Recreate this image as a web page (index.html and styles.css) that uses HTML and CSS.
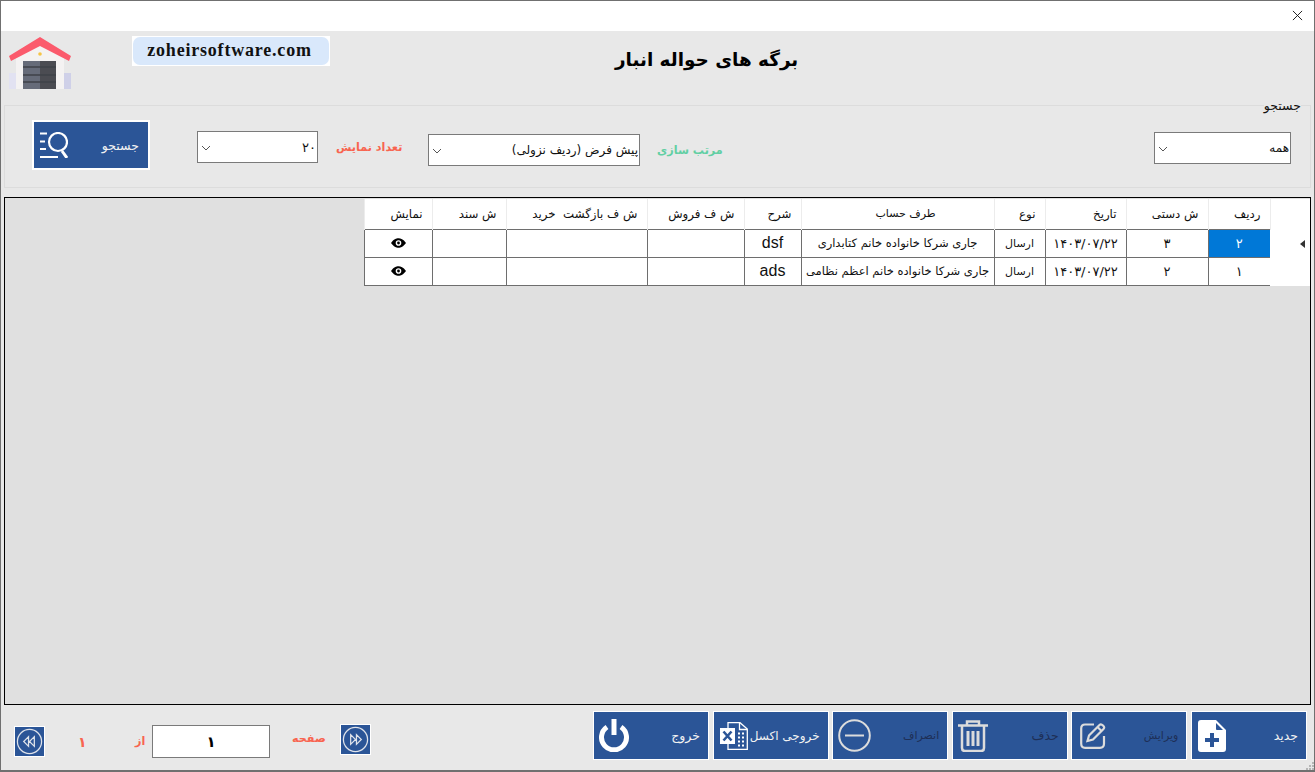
FILE: index.html
```html
<!DOCTYPE html>
<html lang="fa">
  <head>
    <meta charset="UTF-8" />
    <meta name="viewport" content="width=device-width, initial-scale=1.0" />
    <title>برگه های حواله انبار</title>
    <link rel="stylesheet" href="styles.css">
  </head>

  <body>
    <div class="pencere">
      <!-- نوار عنوان -->
      <div class="nawar-onvan">
        <svg class="bastan" viewBox="0 0 12 12"><path d="M1 1l10 10M11 1L1 11" /></svg>
      </div>

      <!-- سربرگ -->
      <header class="sarbarg">
        <svg class="logo" viewBox="0 0 62 54">
          <path d="M0 36H8V52H0Z" fill="#e2e2f2" />
          <path d="M54 36H62V52H54Z" fill="#cfd0e8" />
          <path d="M7 20L31 6L55 20V52H7Z" fill="#f4f2f2" />
          <path d="M0 19L31 0L62 19L60 24L31 9L2 24Z" fill="#fb5a6c" />
          <circle cx="31" cy="17" r="1.800" fill="#f6c445" />
          <path d="M14 24H31V52H14Z" fill="#666b79" />
          <path d="M31 24H47V52H31Z" fill="#4b4c52" />
          <path d="M14 30H47M14 38H47M14 45H47" stroke="#3f4148" stroke-width="1.500" />
        </svg>
        <div class="daman"><span>zoheirsoftware.com</span></div>
        <h1>برگه های حواله انبار</h1>
      </header>

      <!-- جستجو -->
      <section class="goroh-jostoju">
        <span class="onvan-goroh">جستجو</span>
        <button class="dokme dokme-jostoju">
          <svg viewBox="0 0 28 26" fill="none" stroke="#fff" stroke-width="2.200">
            <path d="M0 1.500H7M0 9.500H5M0 17H6M0 25H18" />
            <circle cx="18" cy="10" r="9" />
            <path d="M22 19L27 26" stroke-width="3" />
          </svg>
          <span>جستجو</span>
        </button>
        <select class="entekhab entekhab-tedad" dir="rtl"><option>۲۰</option></select>
        <label class="barchasb barchasb-ghermez">تعداد نمایش</label>
        <select class="entekhab entekhab-tartib" dir="rtl"><option>پیش فرض (ردیف نزولی)</option></select>
        <label class="barchasb barchasb-sabz">مرتب سازی</label>
        <select class="entekhab entekhab-hame" dir="rtl"><option>همه</option></select>
      </section>

      <!-- جدول -->
      <main class="jadval-ghab">
        <table class="jadval" dir="rtl">
          <colgroup>
            <col class="c-sar"><col class="c-radif"><col class="c-dasti"><col class="c-tarikh"><col class="c-no"><col class="c-taraf"><col class="c-sharh"><col class="c-foroush"><col class="c-bazgasht"><col class="c-sanad"><col class="c-namayesh">
          </colgroup>
          <thead>
            <tr>
              <th></th>
              <th>ردیف</th>
              <th>ش دستی</th>
              <th>تاریخ</th>
              <th>نوع</th>
              <th class="taraf-hesab">طرف حساب</th>
              <th>شرح</th>
              <th>ش ف فروش</th>
              <th>ش ف بازگشت&nbsp; خرید</th>
              <th>ش سند</th>
              <th>نمایش</th>
            </tr>
          </thead>
          <tbody>
            <tr>
              <td class="sar-satr"><span class="felesh"></span></td>
              <td class="adad entekhab-shode">۲</td>
              <td class="adad">۳</td>
              <td class="tarikh">۱۴۰۳/۰۷/۲۲</td>
              <td>ارسال</td>
              <td class="matn-taraf">جاری شرکا خانواده خانم کتابداری</td>
              <td class="latin">dsf</td>
              <td></td>
              <td></td>
              <td></td>
              <td><svg class="cheshm" viewBox="0 0 16 10"><path fill-rule="evenodd" d="M0 5C3 1 5.500 0 8 0s5 1 8 5c-3 4-5.500 5-8 5s-5-1-8-5zM8 2a3 3 0 1 0 0 6a3 3 0 0 0 0-6z" /><circle cx="8" cy="5" r="1.500" /></svg></td>
            </tr>
            <tr>
              <td class="sar-satr"></td>
              <td class="adad">۱</td>
              <td class="adad">۲</td>
              <td class="tarikh">۱۴۰۳/۰۷/۲۲</td>
              <td>ارسال</td>
              <td class="matn-taraf">جاری شرکا خانواده خانم اعظم نظامی</td>
              <td class="latin">ads</td>
              <td></td>
              <td></td>
              <td></td>
              <td><svg class="cheshm" viewBox="0 0 16 10"><path fill-rule="evenodd" d="M0 5C3 1 5.500 0 8 0s5 1 8 5c-3 4-5.500 5-8 5s-5-1-8-5zM8 2a3 3 0 1 0 0 6a3 3 0 0 0 0-6z" /><circle cx="8" cy="5" r="1.500" /></svg></td>
            </tr>
          </tbody>
        </table>
      </main>

      <!-- پایین صفحه -->
      <footer class="paein">
        <button class="saffe-dokme aval">
          <svg viewBox="0 0 30 30" fill="none" stroke="#dfe3ea" stroke-width="1.300">
            <circle cx="15" cy="15" r="12.500" />
            <path d="M14 10L9 15L14 20ZM20 10L15 15L20 20Z" />
          </svg>
        </button>
        <span class="saffe-matn adad-kol">۱</span>
        <span class="saffe-matn az">از</span>
        <input class="saffe-vorudi" value="۱" dir="rtl">
        <span class="saffe-matn saffe">صفحه</span>
        <button class="saffe-dokme badi">
          <svg viewBox="0 0 30 30" fill="none" stroke="#dfe3ea" stroke-width="1.300">
            <circle cx="15" cy="15" r="12.500" />
            <path d="M10 10L15 15L10 20ZM16 10L21 15L16 20Z" />
          </svg>
        </button>

        <div class="dokme-ha">
          <button class="dokme">
            <svg class="i-khorouj" viewBox="0 0 30 33" fill="none" stroke="#fff" stroke-width="5">
              <path d="M8 8A12.500 12.500 0 1 0 22 8" />
              <path d="M15 0V16" />
            </svg>
            <span>خروج</span>
          </button>
          <button class="dokme dokme-excel">
            <svg class="i-excel" viewBox="0 0 28 28">
              <path d="M8 .700H20L27.300 7V27.300H8Z" fill="none" stroke="#fff" stroke-width="1.300" />
              <path d="M19.500 1V7.500H27" fill="none" stroke="#fff" stroke-width="1.300" />
              <path d="M18 10.500h2v2h-2zM22 10.500h2v2h-2zM18 14.500h2v2h-2zM22 14.500h2v2h-2zM18 18.500h2v2h-2zM22 18.500h2v2h-2zM18 22.500h2v2h-2zM22 22.500h2v2h-2z" fill="#fff" />
              <path d="M0 6H15V22H0Z" fill="#fff" />
              <path d="M3.500 9.500L11.500 18.500M11.500 9.500L3.500 18.500" stroke="#2b5597" stroke-width="2.600" />
            </svg>
            <span>خروجی اکسل</span>
          </button>
          <button class="dokme tire riz">
            <svg class="i-enseraf" viewBox="0 0 33 33" fill="none" stroke="#dcdcdc" stroke-width="2">
              <circle cx="16.500" cy="16.500" r="15.300" />
              <path d="M7 16.500H26" />
            </svg>
            <span>انصراف</span>
          </button>
          <button class="dokme tire">
            <svg class="i-hazf" viewBox="0 0 30 32" fill="none" stroke="#dcdcdc" stroke-width="2.500">
              <path d="M0 5.500H30M9 5V1.500H21V5" />
              <path d="M4 6V28C4 30 5 31 7 31H23C25 31 26 30 26 28V6" />
              <path d="M10 11V26M15 11V26M20 11V26" stroke-width="3" />
            </svg>
            <span>حذف</span>
          </button>
          <button class="dokme tire riz">
            <svg class="i-virayesh" viewBox="0 0 26 26" fill="none" stroke="#dcdcdc" stroke-width="2.200">
              <path d="M14 1.500H5C2.500 1.500 1.200 3 1.200 5.500V20.500C1.200 23 2.500 24.800 5 24.800H20C22.500 24.800 24 23 24 20.500V13" />
              <path d="M9 12.500L19.500 2C20.500 1 21.500 1 23 2.500C24.500 4 24.500 5 23.500 6L13 16.500L7.500 18Z" />
              <path d="M17.500 4L21.500 8" />
            </svg>
            <span>ویرایش</span>
          </button>
          <button class="dokme">
            <svg class="i-jadid" viewBox="0 0 28 32">
              <path fill="#fff" fill-rule="evenodd" d="M3 0H18L28 10V29C28 31 27 32 25 32H3C1 32 0 31 0 29V3C0 1 1 0 3 0ZM12 13V18H7V22H12V27H16V22H21V18H16V13Z" />
              <path d="M18 3L25 10H19C18.500 10 18 9.500 18 9Z" fill="#2b5597" />
            </svg>
            <span>جدید</span>
          </button>
        </div>
        <svg class="grip" viewBox="0 0 8 8" fill="#b5b5b5"><path d="M6 0h2v2H6zM3 3h2v2H3zM6 3h2v2H6zM0 6h2v2H0zM3 6h2v2H3zM6 6h2v2H6z" /></svg>
      </footer>
    </div>
  </body>
</html>
```

FILE: styles.css
```css
/* عمومی */
* {
  box-sizing: border-box;
}

html,
body {
  margin: 0;
  padding: 0;
}

body {
  font-family: "DejaVu Sans", sans-serif;
  font-size: 11px;
  color: #111;
  background-color: #e8e8e8;
}

.pencere {
  width: 1315px;
  height: 772px;
  border: 1px solid #707070;
  border-bottom-width: 2px;
  background-color: #e8e8e8;
  overflow: hidden;
  display: flex;
  flex-direction: column;
}

/* نوار عنوان */
.nawar-onvan {
  height: 30px;
  flex: none;
  background-color: #fff;
  display: flex;
  align-items: center;
  justify-content: flex-end;
  padding: 0 11px 1px 0;
}

.bastan {
  width: 11px;
  height: 11px;
  fill: none;
  stroke: #111;
  stroke-width: 1;
}

/* سربرگ */
.sarbarg {
  height: 74px;
  flex: none;
  display: flex;
  align-items: flex-start;
  padding-left: 8px;
}

.logo {
  width: 62px;
  height: 54px;
  margin-top: 6px;
  flex: none;
  filter: blur(0.5px);
}

.daman {
  width: 198px;
  height: 30px;
  margin: 5px 0 0 61px;
  padding: 1px;
  flex: none;
  background-color: #fff;
  text-align: center;
}

.daman span {
  display: block;
  height: 28px;
  padding-right: 3px;
  background-color: #d9e8fb;
  border-radius: 7px;
  font-family: "Liberation Serif", serif;
  font-size: 18px;
  line-height: 27px;
  font-weight: bold;
  letter-spacing: 0.8px;
}

.sarbarg h1 {
  margin: 15px 0 0 285px;
  font-size: 18.400px;
  line-height: 28px;
  font-weight: bold;
  color: #000;
  white-space: nowrap;
}

/* گروه جستجو */
.goroh-jostoju {
  position: relative;
  height: 83px;
  margin: 0 3px 0 3px;
  flex: none;
  border: 1px solid #dcdcdc;
  display: flex;
  align-items: flex-start;
}

.onvan-goroh {
  position: absolute;
  top: -7px;
  right: 9px;
  font-size: 12.500px;
  line-height: 14px;
  background-color: #e8e8e8;
}

.dokme {
  width: 118px;
  height: 50px;
  padding: 0 9px 0 6px;
  flex: none;
  display: flex;
  align-items: center;
  justify-content: space-between;
  background-color: #2b5597;
  border: 2px solid #fff;
  color: #f2f2f2;
  font-family: inherit;
  font-size: 12.500px;
}

.dokme-jostoju {
  margin: 14px 0 0 27px;
}

.dokme-jostoju svg {
  width: 28px;
  height: 26px;
}

.entekhab {
  height: 32px;
  flex: none;
  appearance: none;
  border: 1px solid #7a7a7a;
  border-radius: 0;
  padding: 0 1px 0 20px;
  font-family: inherit;
  font-size: 12px;
  color: #111;
  background: #fff url("data:image/svg+xml,%3Csvg xmlns='http://www.w3.org/2000/svg' width='10' height='6'%3E%3Cpath d='M1 1l4 4 4-4' fill='none' stroke='%23555'/%3E%3C/svg%3E") no-repeat 3px 13px;
}

.entekhab-tedad {
  width: 121px;
  margin: 25px 0 0 47px;
  font-size: 13px;
}

.entekhab-tartib {
  width: 212px;
  margin: 28px 0 0 24px;
}

.entekhab-hame {
  width: 137px;
  margin: 26px 0 0 431px;
}

.barchasb {
  font-weight: bold;
  font-size: 11.200px;
  line-height: 16px;
  white-space: nowrap;
}

.barchasb-ghermez {
  width: 68px;
  margin: 34px 0 0 18px;
  color: #f8644f;
}

.barchasb-sabz {
  width: 66px;
  margin: 37px 0 0 17px;
  color: #62cfa3;
}

/* جدول */
.jadval-ghab {
  height: 508px;
  margin: 9px 3px 0 3px;
  flex: none;
  border: 1px solid #000;
  background-color: #e0e0e0;
  padding: 1px 0 0 0;
  display: flex;
  justify-content: flex-end;
  align-items: flex-start;
}

.jadval {
  width: 946px;
  table-layout: fixed;
  border-collapse: collapse;
  background-color: #fff;
}

.c-sar { width: 40px; }
.c-radif { width: 62px; }
.c-dasti { width: 82px; }
.c-tarikh { width: 81px; }
.c-no { width: 51px; }
.c-taraf { width: 193px; }
.c-sharh { width: 57px; }
.c-foroush { width: 97px; }
.c-bazgasht { width: 141px; }
.c-sanad { width: 74px; }
.c-namayesh { width: 68px; }

.jadval th {
  height: 30px;
  padding: 0 9px 0 0;
  font-weight: normal;
  font-size: 11.800px;
  text-align: right;
  white-space: nowrap;
  border-left: 1px solid #ececec;
}

.jadval th.taraf-hesab {
  padding-right: 58px;
  font-size: 11px;
}

.jadval td {
  height: 28px;
  padding: 0;
  font-size: 11px;
  text-align: center;
  white-space: nowrap;
  overflow: hidden;
  border: 1px solid #6e6e6e;
}

.jadval td.sar-satr {
  border: 0;
  text-align: right;
  padding-right: 5px;
}

.jadval td:nth-child(2) {
  border-right: 0;
}

.jadval td.adad {
  font-size: 13px;
}

.jadval td.tarikh {
  font-size: 13px;
  letter-spacing: 0.5px;
}

.jadval td.matn-taraf {
  font-size: 11.500px;
}

.felesh {
  display: inline-block;
  border-style: solid;
  border-width: 4px 5px 4px 0;
  border-color: transparent #333 transparent transparent;
  vertical-align: middle;
}

.jadval td.entekhab-shode {
  background-color: #0078d7;
  color: #fff;
}

.jadval td.latin {
  font-family: "Liberation Sans", sans-serif;
  font-size: 16px;
  padding-bottom: 1px;
}

.cheshm {
  width: 15px;
  height: 10px;
  display: block;
  margin: 0 auto;
}

/* پایین صفحه */
.paein {
  position: relative;
  flex: 1;
  display: flex;
  align-items: flex-start;
  padding-left: 13px;
}

.saffe-dokme {
  width: 31px;
  height: 31px;
  padding: 0;
  flex: none;
  background-color: #2b5597;
  border: 1px solid #fff;
}

.saffe-dokme svg {
  width: 29px;
  height: 29px;
  display: block;
}

.aval {
  margin-top: 21px;
}

.saffe-matn {
  flex: none;
  color: #f8644f;
  font-size: 11.200px;
  font-weight: bold;
  line-height: 16px;
}

.adad-kol {
  margin: 29px 0 0 33px;
  width: 9px;
  font-size: 14px;
}

.az {
  margin: 29px 0 0 48px;
  width: 14px;
}

.saffe-vorudi {
  width: 118px;
  height: 33px;
  margin: 20px 0 0 3px;
  flex: none;
  border: 1px solid #7a7a7a;
  background-color: #fff;
  padding: 0;
  text-align: center;
  font-family: inherit;
  font-size: 15px;
  font-weight: bold;
  color: #000;
}

.saffe {
  margin: 26px 0 0 22px;
  width: 35px;
}

.badi {
  margin: 19px 0 0 13px;
}

.dokme-ha {
  margin: 6px 0 0 222px;
  display: flex;
  gap: 3.600px;
}

.dokme-ha .dokme {
  width: 116px;
  height: 49px;
  border-width: 1px;
  padding: 0 8px 0 5px;
}

.dokme.tire span {
  color: #1e2f56;
}

.dokme.riz {
  font-size: 11px;
}

.dokme.dokme-excel {
  font-size: 12px;
}

.i-khorouj {
  width: 30px;
  height: 33px;
}

.i-excel {
  width: 28px;
  height: 28px;
  margin-left: 1px;
}

.i-enseraf {
  width: 33px;
  height: 33px;
}

.i-hazf {
  width: 30px;
  height: 32px;
}

.i-virayesh {
  width: 26px;
  height: 26px;
  margin-left: 3px;
}

.i-jadid {
  width: 28px;
  height: 32px;
  margin-left: 1px;
}

.grip {
  position: absolute;
  right: 0;
  bottom: 0;
  width: 8px;
  height: 8px;
}
```
